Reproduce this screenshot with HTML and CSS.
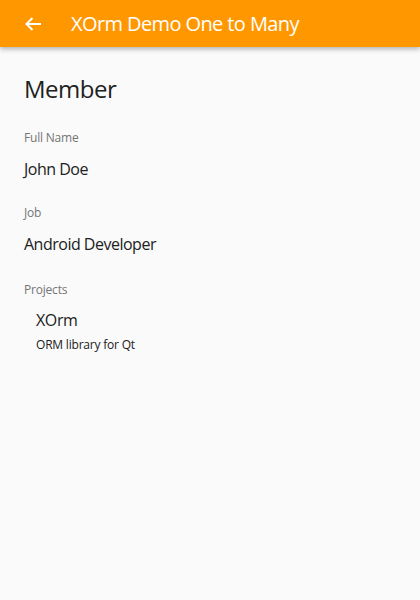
FILE: index.html
```html
<!DOCTYPE html>
<html>
<head>
<meta charset="utf-8">
<link rel="stylesheet" href="styles.css">
</head>
<body>
<header class="toolbar">
  <button class="back" aria-label="Back">
    <svg width="16" height="14" viewBox="0 0 16 14"><path d="M16 7H1.5M7.5 1L1.5 7l6 6" fill="none" stroke="#fff" stroke-width="2"/></svg>
  </button>
  <h1 class="title">XOrm Demo One to Many</h1>
</header>
<main class="content">
  <h2 class="heading">Member</h2>
  <div class="field">
    <div class="label">Full Name</div>
    <div class="value">John Doe</div>
  </div>
  <div class="field">
    <div class="label">Job</div>
    <div class="value">Android Developer</div>
  </div>
  <div class="field field-projects">
    <div class="label">Projects</div>
    <div class="project">
      <div class="project-name">XOrm</div>
      <div class="project-desc">ORM library for Qt</div>
    </div>
  </div>
</main>
</body>
</html>
```
FILE: styles.css
```css
html, body {
  margin: 0;
  padding: 0;
  background: #fafafa;
  font-family: "Open Sans", "Noto Sans", sans-serif;
  color: #212121;
}
.toolbar {
  height: 47px;
  background: #ff9800;
  display: flex;
  align-items: center;
  box-shadow: 0 2px 5px rgba(0,0,0,0.3);
}
.back {
  background: none;
  border: 0;
  padding: 0;
  margin-left: 25px;
  width: 16px;
  height: 14px;
  display: flex;
}
.title {
  margin: 0 0 0 30px;
  font-size: 20px;
  font-weight: 400;
  color: #fff;
  letter-spacing: -0.6px;
}
.content {
  padding: 20px 24px;
}
.heading {
  margin: 0;
  font-size: 24px;
  font-weight: 400;
  line-height: 44px;
  letter-spacing: -0.5px;
}
.field {
  margin-top: 17px;
}
.field + .field {
  margin-top: 23px;
}
.field.field-projects {
  margin-top: 25px;
}
.label {
  font-size: 12px;
  color: #757575;
  line-height: 20px;
  letter-spacing: -0.2px;
}
.value {
  font-size: 16px;
  line-height: 22px;
  margin-top: 10px;
  letter-spacing: -0.5px;
}
.project {
  padding-left: 12px;
  margin-top: 9px;
}
.project-name {
  font-size: 16px;
  line-height: 22px;
  letter-spacing: -0.4px;
}
.project-desc {
  font-size: 12px;
  line-height: 18px;
  margin-top: 5px;
  letter-spacing: -0.2px;
}
```
